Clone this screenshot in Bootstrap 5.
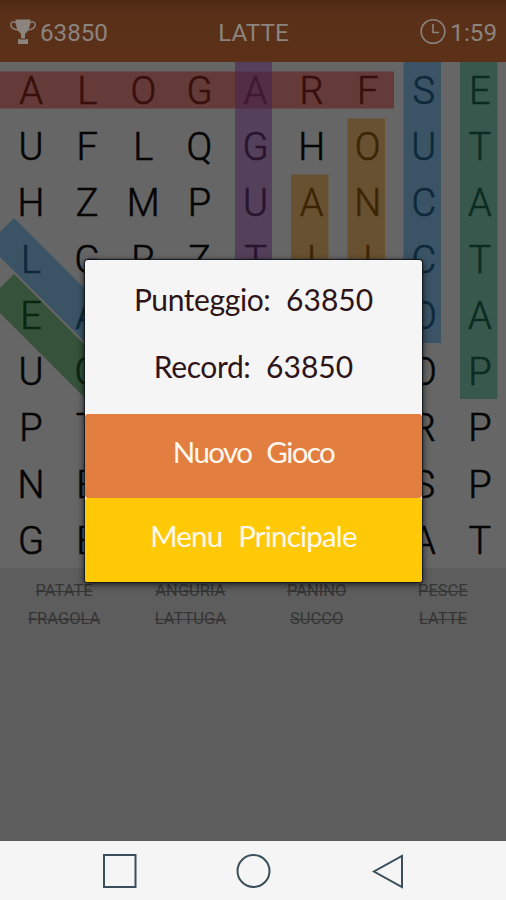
<!DOCTYPE html>
<html lang="it">
<head>
<meta charset="utf-8">
<meta name="viewport" content="width=device-width, initial-scale=1">
<title>Latte</title>
<link href="https://cdn.jsdelivr.net/npm/bootstrap@5.3.0/dist/css/bootstrap.min.css" rel="stylesheet">
<style>
body{font-family:Roboto,sans-serif;background:#5d5d5d;width:506px;height:900px;overflow:hidden}
.topbar{height:62px;background:linear-gradient(#4b2814 0,#532c16 5px,#5a3018 16px,#5c3118 100%);color:#8b847f;font-size:24.200px;line-height:28px;padding:3px 9px 0 10px}
.topbar>div{flex:1 1 0}
.board{height:506px;background:#666}
.letters{display:grid;grid-template-columns:repeat(9,1fr);grid-template-rows:repeat(9,minmax(0,1fr));height:506px;padding-left:3px;margin:1px -2px 0 0;color:#050505;font-size:38px;font-weight:300;line-height:57px;text-align:center;-webkit-text-stroke:.6px currentColor}
.marks{left:0;top:0}
.wordlist{display:grid;grid-template-columns:repeat(4,1fr);padding:9px 0 0 1px;color:#353535;font-size:16.500px;line-height:28px;text-align:center}
.wordlist s{text-decoration-thickness:1px}
.softkeys{height:59px;background:#f5f5f5}
.dialogbox{left:85px;top:260px;width:337px;height:322px;border-radius:3px;background:#f5f5f5;box-shadow:0 0 1px 1px #151b1e,0 2px 7px 1px rgba(0,0,0,.65);font-family:Lato,sans-serif;font-size:30px;line-height:36px;color:#2d1418}
.scores{height:154px;padding-top:21px;word-spacing:8px}
.scoreline{height:67px}
.caption-word{letter-spacing:-.4px}
.choice{height:84px;border:0;border-radius:3px;color:#fff8ee;padding:0 0 9px;font-size:29.500px;word-spacing:9px}
.again{background:#e37e41;letter-spacing:-1.600px}
.mainmenu{background:#ffca05;letter-spacing:-.800px}
</style>
</head>
<body class="d-flex flex-column position-relative">
<header class="topbar d-flex align-items-center flex-shrink-0">
  <div class="d-flex align-items-center">
    <svg width="26" height="26" viewBox="0 0 26 26" class="me-1 flex-shrink-0 overflow-visible"><g transform="translate(0 -1)"><path fill="#8b847f" d="M5.500.5h15c0 7-2 11.500-5.500 14.500v5h3V25H8v-5h3v-5C7.500 12 5.500 7.500 5.500.5z"/><path d="M6 3.500C3 2.500.8 3 .8 5.500c0 3 3.500 5 7.500 5.500M20 3.500c3-1 5.200-.5 5.200 2 0 3-3.500 5-7.500 5.500" fill="none" stroke="#8b847f" stroke-width="1.400"/><path d="M10 20h6" stroke="#5b3018"/></g></svg>
    <span>63850</span>
  </div>
  <div class="text-center">LATTE</div>
  <div class="d-flex align-items-center justify-content-end">
    <svg width="26" height="26" viewBox="0 0 26 26" class="me-1 flex-shrink-0 overflow-visible" fill="none" stroke="#8b847f" stroke-width="1.600"><circle cx="13" cy="11.500" r="11.800"/><path d="M13 4v8.500h6"/></svg>
    <span>1:59</span>
  </div>
</header>

<main class="board position-relative flex-shrink-0 overflow-hidden">
  <div class="letters">
    <span>A</span><span>L</span><span>O</span><span>G</span><span>A</span><span>R</span><span>F</span><span>S</span><span>E</span>
    <span>U</span><span>F</span><span>L</span><span>Q</span><span>G</span><span>H</span><span>O</span><span>U</span><span>T</span>
    <span>H</span><span>Z</span><span>M</span><span>P</span><span>U</span><span>A</span><span>N</span><span>C</span><span>A</span>
    <span>L</span><span>G</span><span>R</span><span>Z</span><span>T</span><span>I</span><span>I</span><span>C</span><span>T</span>
    <span>E</span><span>A</span><span></span><span></span><span></span><span></span><span></span><span>O</span><span>A</span>
    <span>U</span><span>G</span><span></span><span></span><span></span><span></span><span></span><span>O</span><span>P</span>
    <span>P</span><span>T</span><span></span><span></span><span></span><span></span><span></span><span>R</span><span>P</span>
    <span>N</span><span>E</span><span></span><span></span><span></span><span></span><span></span><span>S</span><span>P</span>
    <span>G</span><span>E</span><span></span><span></span><span></span><span></span><span></span><span>A</span><span>T</span>
  </div>
  <!-- Translucent strips over the found words -->
  <svg class="marks position-absolute" width="506" height="506" viewBox="0 0 506 506" fill-opacity=".55">
    <path fill="#621813" d="M0 9.500h394V46.500H0z"/>
    <path fill="#452150" d="M235 0h37v240h-37z"/>
    <path fill="#6a3f03" d="M291 112.500h37.500V240H291zM347.500 56.500H385V240h-37.500z"/>
    <path fill="#164566" d="M403.500 0H441v281h-37.500z"/>
    <path fill="#144c39" d="M460 0h37.500v337H460z"/>
    <path fill="#164566" d="M14 156l106 106-26.500 26.500-106-106z"/>
    <path fill="#0f4118" d="M14 212l106 106-26.500 26.500-106-106z"/>
  </svg>
</main>

<section class="wordlist flex-grow-1 align-content-start">
  <s>PATATE</s><s>ANGURIA</s><s>PANINO</s><s>PESCE</s>
  <s>FRAGOLA</s><s>LATTUGA</s><s>SUCCO</s><s>LATTE</s>
</section>

<footer class="softkeys flex-shrink-0">
  <svg class="d-block" width="506" height="59" viewBox="0 0 506 59" fill="none" stroke="#3b4f5b" stroke-width="2"><path d="M104 14h31.500v32H104z"/><circle cx="253.500" cy="30" r="16"/><path d="M402 15v31l-28-15.500z"/></svg>
</footer>

<div class="dialogbox position-absolute" role="dialog">
  <div class="scores text-center">
    <div class="scoreline"><span class="caption-word">Punteggio:</span> <span>63850</span></div>
    <div class="scoreline"><span class="caption-word">Record:</span> <span>63850</span></div>
  </div>
  <button class="choice again d-block w-100">Nuovo Gioco</button>
  <button class="choice mainmenu d-block w-100">Menu Principale</button>
</div>
<script src="https://cdn.jsdelivr.net/npm/bootstrap@5.3.0/dist/js/bootstrap.bundle.min.js"></script>
</body>
</html>
